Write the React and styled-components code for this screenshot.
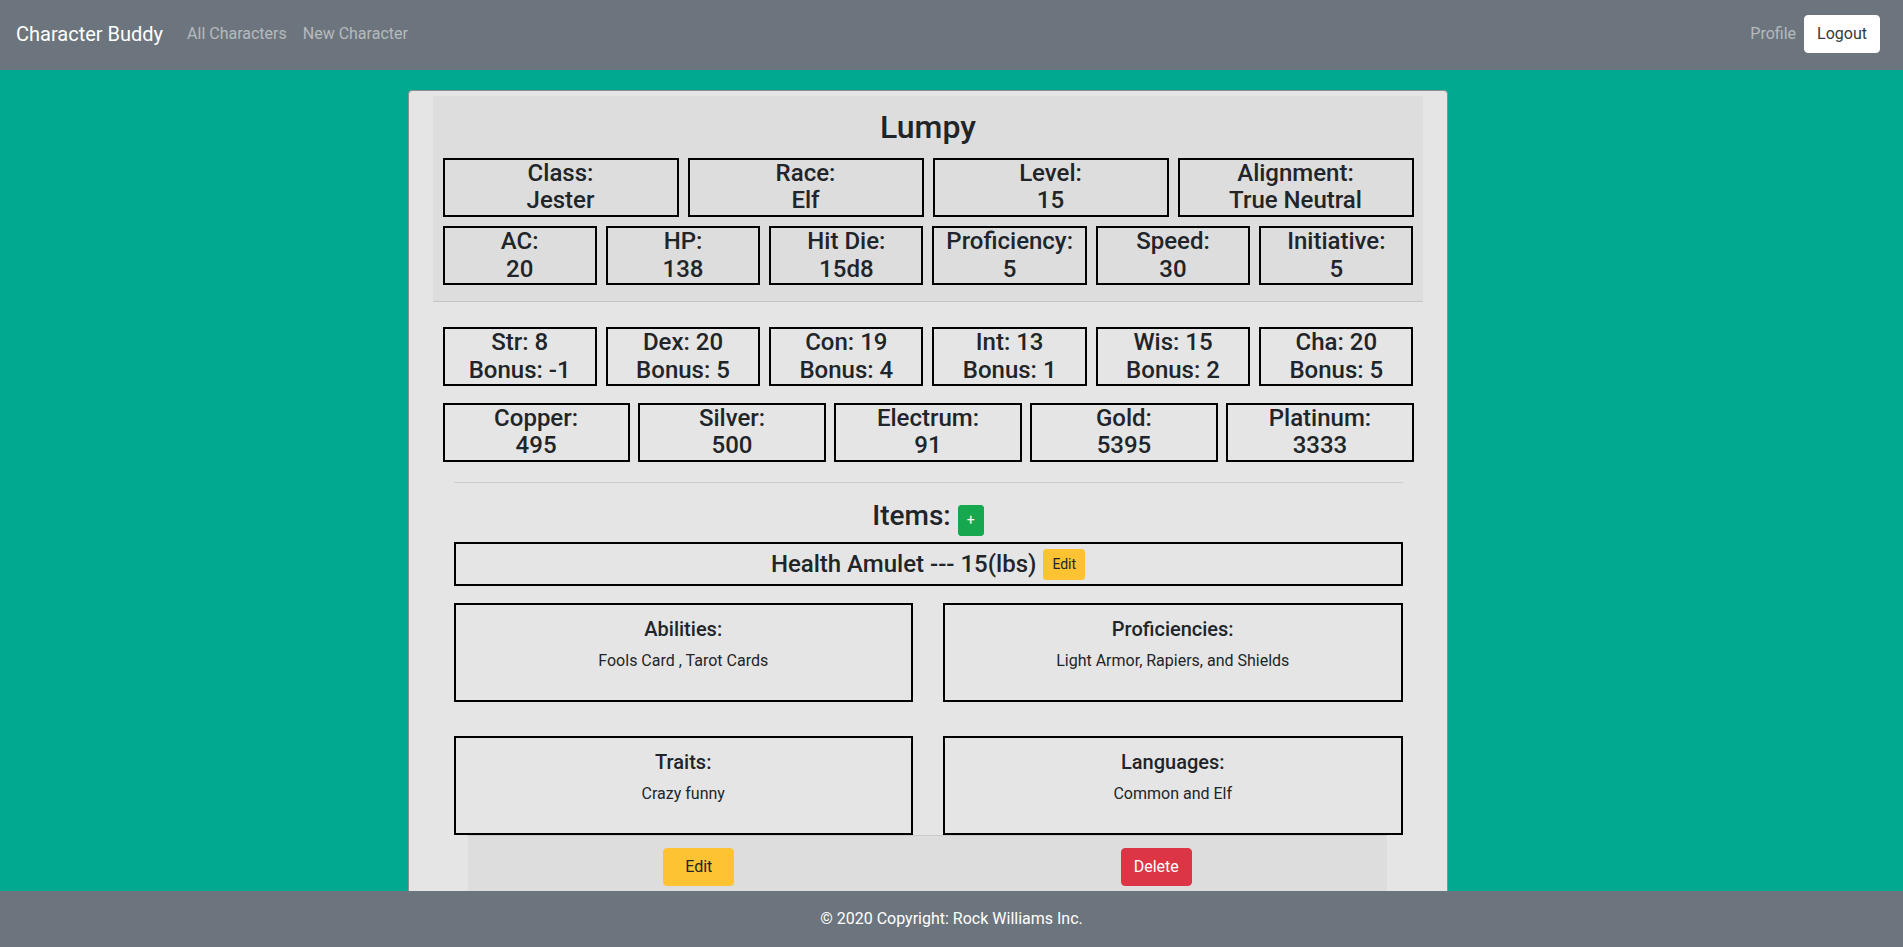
import React from 'react';
import styled, { createGlobalStyle } from 'styled-components';

// global page reset, bootstrap-ish defaults
const GlobalStyle = createGlobalStyle`
  * { box-sizing: border-box; }
  body {
    margin: 0;
    font-family: Roboto, 'Liberation Sans', sans-serif;
    font-size: 16px;
    line-height: 1.5;
    color: #212529;
    background: #00a98f;
  }
`;

// ---------- NAVBAR ----------

const Navbar = styled.nav`
  display: flex;
  align-items: center;
  height: 70px;
  padding: 0 16px 3px;
  background: #6c757d;
`;

const Brand = styled.a`
  font-size: 20px;
  line-height: 30px;
  color: #fff;
  margin-right: 16px;
  text-decoration: none;
`;

const NavLink = styled.a`
  padding: 0 8px;
  line-height: 24px;
  color: rgba(255, 255, 255, 0.5);
  text-decoration: none;
`;

const NavRight = styled.div`
  display: flex;
  align-items: center;
  margin-left: auto;
  margin-right: 7px;
`;

const Button = styled.button`
  font-family: inherit;
  font-size: ${(p) => (p.$small ? '14px' : '16px')};
  line-height: ${(p) => (p.$small ? '21px' : '24px')};
  padding: ${(p) => (p.$small ? '4px 8px' : `6px ${p.$padX || 12}px`)};
  border-radius: ${(p) => (p.$small ? '3px' : '4px')};
  border: 1px solid ${(p) => p.$bg};
  background: ${(p) => p.$bg};
  color: ${(p) => p.$color || '#212529'};
  font-weight: 400;
  vertical-align: baseline;
  cursor: pointer;
`;

// ---------- CARD ----------

const Main = styled.main`
  padding-top: 20px;
`;

const Card = styled.div`
  width: 1040px;
  margin-left: 408px;
  background: #e5e5e5;
  border: 1px solid #8f8f8f;
  border-radius: 4px;
  padding: 5px 24px 0;
`;

const Header = styled.div`
  background: #dddddd;
  border-bottom: 1px solid #c4c4c4;
  padding: 12px 9.5px 16px;
`;

const Title = styled.h2`
  margin: 0 0 11.6px;
  font-size: 32px;
  font-weight: 500;
  line-height: 1.2;
  text-align: center;
`;

const BoxRow = styled.div`
  display: grid;
  grid-template-columns: repeat(${(p) => p.$cols}, 1fr);
  column-gap: ${(p) => p.$gap || 9}px;
  row-gap: ${(p) => p.$rowGap || 0}px;
  margin-top: ${(p) => p.$top || 0}px;
`;

const StatBox = styled.div`
  border: 2px solid #000;
  text-align: center;
  font-size: 24px;
  font-weight: 500;
  line-height: 27.5px;
`;

const Body = styled.div`
  padding: 25px 9.5px 0;
`;

const Section = styled.div`
  padding: 0 11px;
`;

const Rule = styled.hr`
  margin: 20px 0 16px;
  border: 0;
  border-top: 1px solid rgba(0, 0, 0, 0.1);
`;

const ItemsTitle = styled.h3`
  margin: 0 0 6px;
  font-size: 28px;
  font-weight: 500;
  line-height: 1.2;
  text-align: center;
`;

const ItemBox = styled.div`
  display: flex;
  align-items: center;
  justify-content: center;
  min-height: 44.5px;
  border: 2px solid #000;
  font-size: 24px;
  font-weight: 500;
  line-height: 1.2;
  margin-bottom: 16.6px;
  gap: 7px;
`;

const InfoBox = styled.div`
  border: 2px solid #000;
  padding: 12px;
  text-align: center;
`;

const InfoTitle = styled.h5`
  margin: 0 0 8px;
  font-size: 20px;
  font-weight: 500;
  line-height: 1.2;
`;

const InfoText = styled.p`
  margin: 0 0 15px;
`;

const CardFooter = styled.div`
  display: grid;
  grid-template-columns: 1fr 1fr;
  justify-items: center;
  margin: 0 36px 0 35px;
  padding: 12px 2px;
  background: #dddddd;
  border-top: 1px solid #c9c9c9;
`;

const PageFooter = styled.footer`
  position: fixed;
  left: 0;
  right: 0;
  bottom: 0;
  height: 56px;
  display: flex;
  align-items: center;
  justify-content: center;
  background: #6c757d;
  color: #fff;
`;

const traits = [
  ['Class:', 'Jester'],
  ['Race:', 'Elf'],
  ['Level:', '15'],
  ['Alignment:', 'True Neutral'],
];

const combat = [
  ['AC:', '20'],
  ['HP:', '138'],
  ['Hit Die:', '15d8'],
  ['Proficiency:', '5'],
  ['Speed:', '30'],
  ['Initiative:', '5'],
];

const scores = [
  ['Str: 8', 'Bonus: -1'],
  ['Dex: 20', 'Bonus: 5'],
  ['Con: 19', 'Bonus: 4'],
  ['Int: 13', 'Bonus: 1'],
  ['Wis: 15', 'Bonus: 2'],
  ['Cha: 20', 'Bonus: 5'],
];

const coins = [
  ['Copper:', '495'],
  ['Silver:', '500'],
  ['Electrum:', '91'],
  ['Gold:', '5395'],
  ['Platinum:', '3333'],
];

const details = [
  ['Abilities:', 'Fools Card , Tarot Cards'],
  ['Proficiencies:', 'Light Armor, Rapiers, and Shields'],
  ['Traits:', 'Crazy funny'],
  ['Languages:', 'Common and Elf'],
];

function Boxes({ list }) {
  return list.map(([top, bottom]) => (
    <StatBox key={top}>
      <div>{top}</div>
      <div>{bottom}</div>
    </StatBox>
  ));
}

export default function App() {
  return (
    <>
      <GlobalStyle />
      <Navbar>
        <Brand href="#">Character Buddy</Brand>
        <NavLink href="#">All Characters</NavLink>
        <NavLink href="#">New Character</NavLink>
        <NavRight>
          <NavLink href="#">Profile</NavLink>
          <Button $bg="#fff" $color="#343a40">Logout</Button>
        </NavRight>
      </Navbar>

      <Main>
        <Card>
          <Header>
            <Title>Lumpy</Title>
            <BoxRow $cols={4}>
              <Boxes list={traits} />
            </BoxRow>
            <BoxRow $cols={6} $top={9.4}>
              <Boxes list={combat} />
            </BoxRow>
          </Header>

          <Body>
            <BoxRow $cols={6}>
              <Boxes list={scores} />
            </BoxRow>
            <BoxRow $cols={5} $gap={8.8} $top={16.6}>
              <Boxes list={coins} />
            </BoxRow>

            <Section>
              <Rule />
              <ItemsTitle>
                Items: <Button $small $bg="#17a84f" $color="#fff">+</Button>
              </ItemsTitle>
              <ItemBox>
                <span>Health Amulet --- 15(lbs)</span>
                <Button $small $bg="#fdc332">Edit</Button>
              </ItemBox>
              <BoxRow $cols={2} $gap={30} $rowGap={33.7}>
                {details.map(([title, text]) => (
                  <InfoBox key={title}>
                    <InfoTitle>{title}</InfoTitle>
                    <InfoText>{text}</InfoText>
                  </InfoBox>
                ))}
              </BoxRow>
            </Section>
          </Body>

          <CardFooter>
            <Button $bg="#fdc332" $padX={21}>Edit</Button>
            <Button $bg="#dc3545" $color="#fff">Delete</Button>
          </CardFooter>
        </Card>
      </Main>

      <PageFooter>© 2020 Copyright: Rock Williams Inc.</PageFooter>
    </>
  );
}
